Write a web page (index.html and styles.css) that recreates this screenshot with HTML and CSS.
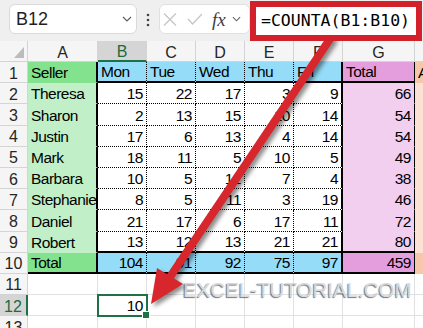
FILE: index.html
```html
<!DOCTYPE html>
<html lang="en">
<head>
    <meta charset="UTF-8">
    <meta name="viewport" content="width=device-width, initial-scale=1.0">
    <title>COUNTA example</title>
    <link rel="stylesheet" href="styles.css">
</head>
<body>
    <div class="toolbar">
        <div class="namebox">
            <span>B12</span>
            <svg class="chev" viewBox="0 0 10 6"><polyline points="1,1 5,5 9,1"/></svg>
        </div>
        <div class="dots">
            <svg width="4" height="14" viewBox="0 0 4 14">
                <circle cx="2" cy="2" r="1.3"/>
                <circle cx="2" cy="7" r="1.3"/>
                <circle cx="2" cy="12" r="1.3"/>
            </svg>
        </div>
        <div class="fxbox">
            <svg class="ico-x" width="14" height="13" viewBox="0 0 14 13"><path d="M1 0.5 L13 12.5 M13 0.5 L1 12.5"/></svg>
            <svg class="ico-ok" width="16" height="12" viewBox="0 0 16 12"><polyline points="1,6 5.5,11 15,1"/></svg>
            <span class="fx">fx</span>
            <svg class="chev" viewBox="0 0 10 6"><polyline points="1,1 5,5 9,1"/></svg>
        </div>
        <div class="formula">=COUNTA(B1:B10)</div>
    </div>

    <div class="sheet">
        <!-- column headers -->
        <div class="corner"><span class="tri"></span></div>
        <div class="ch">A</div>
        <div class="ch sel">B</div>
        <div class="ch">C</div>
        <div class="ch">D</div>
        <div class="ch">E</div>
        <div class="ch">F</div>
        <div class="ch">G</div>
        <div class="ch">H</div>

        <!-- row 1 -->
        <div class="rh">1</div>
        <div class="gs tr">Seller</div>
        <div class="bl dr tb">Mon</div>
        <div class="bl dr tb">Tue</div>
        <div class="bl dr tb">Wed</div>
        <div class="bl dr tb">Thu</div>
        <div class="bl tr tb">Fri</div>
        <div class="pk sr tb">Total</div>
        <div class="pe2">Avg</div>

        <!-- row 2 -->
        <div class="rh">2</div>
        <div class="gl tr">Theresa</div>
        <div class="num dr db">15</div>
        <div class="num dr db">22</div>
        <div class="num dr db">17</div>
        <div class="num dr db">3</div>
        <div class="num tr db">9</div>
        <div class="pkl num sr">66</div>
        <div class="pe"></div>

        <!-- row 3 -->
        <div class="rh">3</div>
        <div class="gl tr">Sharon</div>
        <div class="num dr db">2</div>
        <div class="num dr db">13</div>
        <div class="num dr db">15</div>
        <div class="num dr db">10</div>
        <div class="num tr db">14</div>
        <div class="pkl num sr">54</div>
        <div class="pe"></div>

        <!-- row 4 -->
        <div class="rh">4</div>
        <div class="gl tr">Justin</div>
        <div class="num dr db">17</div>
        <div class="num dr db">6</div>
        <div class="num dr db">13</div>
        <div class="num dr db">4</div>
        <div class="num tr db">14</div>
        <div class="pkl num sr">54</div>
        <div class="pe"></div>

        <!-- row 5 -->
        <div class="rh">5</div>
        <div class="gl tr">Mark</div>
        <div class="num dr db">18</div>
        <div class="num dr db">11</div>
        <div class="num dr db">5</div>
        <div class="num dr db">10</div>
        <div class="num tr db">5</div>
        <div class="pkl num sr">49</div>
        <div class="pe"></div>

        <!-- row 6 -->
        <div class="rh">6</div>
        <div class="gl tr">Barbara</div>
        <div class="num dr db">10</div>
        <div class="num dr db">5</div>
        <div class="num dr db">12</div>
        <div class="num dr db">7</div>
        <div class="num tr db">4</div>
        <div class="pkl num sr">38</div>
        <div class="pe"></div>

        <!-- row 7 -->
        <div class="rh">7</div>
        <div class="gl tr">Stephanie</div>
        <div class="num dr db">8</div>
        <div class="num dr db">5</div>
        <div class="num dr db">11</div>
        <div class="num dr db">3</div>
        <div class="num tr db">19</div>
        <div class="pkl num sr">46</div>
        <div class="pe"></div>

        <!-- row 8 -->
        <div class="rh">8</div>
        <div class="gl tr">Daniel</div>
        <div class="num dr db">21</div>
        <div class="num dr db">17</div>
        <div class="num dr db">6</div>
        <div class="num dr db">17</div>
        <div class="num tr db">11</div>
        <div class="pkl num sr">72</div>
        <div class="pe"></div>

        <!-- row 9 -->
        <div class="rh">9</div>
        <div class="gl tr">Robert</div>
        <div class="num dr tb">13</div>
        <div class="num dr tb">12</div>
        <div class="num dr tb">13</div>
        <div class="num dr tb">21</div>
        <div class="num tr tb">21</div>
        <div class="pkl num sr tb">80</div>
        <div class="pe"></div>

        <!-- row 10 -->
        <div class="rh">10</div>
        <div class="gs tr tb">Total</div>
        <div class="bl num dr tb">104</div>
        <div class="bl num dr tb">91</div>
        <div class="bl num dr tb">92</div>
        <div class="bl num dr tb">75</div>
        <div class="bl num tr tb">97</div>
        <div class="pk num sr tb">459</div>
        <div class="pe2"></div>

        <!-- row 11 -->
        <div class="rh">11</div>
        <div></div><div></div><div></div><div></div><div></div><div></div><div></div><div></div>

        <!-- row 12 -->
        <div class="rh sel">12</div>
        <div></div>
        <div class="num active">10</div>
        <div></div><div></div><div></div><div></div><div></div><div></div>

        <!-- row 13 -->
        <div class="rh">13</div>
        <div></div><div></div><div></div><div></div><div></div><div></div><div></div><div></div>
    </div>

    <div class="watermark">EXCEL-TUTORIAL.COM</div>

    <svg class="arrow" width="423" height="328" viewBox="0 0 423 328">
        <line x1="332" y1="36" x2="170" y2="277"/>
        <polygon points="151,304 157,268 183,284"/>
    </svg>
</body>
</html>
```

FILE: styles.css
```css
* {
    margin: 0;
    padding: 0;
    box-sizing: border-box;
}

body {
    width: 423px;
    height: 328px;
    overflow: hidden;
    position: relative;
    background: #fff;
    font-family: "Liberation Sans", Arial, sans-serif;
    color: #1f1f1f;
}

/* formula bar */
.toolbar {
    height: 41px;
    background: #efefef;
    display: flex;
    align-items: flex-start;
    padding-left: 9px;
}

.namebox {
    width: 128px;
    height: 30px;
    margin-top: 4px;
    background: #fff;
    border: 1px solid #dadada;
    border-radius: 6px;
    display: flex;
    align-items: center;
    justify-content: space-between;
    padding: 0 4px 0 6px;
    font-size: 18px;
}

.chev {
    width: 10px;
    height: 6px;
    fill: none;
    stroke: #606060;
    stroke-width: 1.2;
}

.dots {
    width: 22px;
    margin-top: 13px;
    display: flex;
    justify-content: center;
    fill: #444;
}

.fxbox {
    width: 91px;
    height: 30px;
    margin-top: 4px;
    background: #fff;
    border: 1px solid #e0e0e0;
    border-radius: 6px;
    display: flex;
    align-items: center;
    padding-left: 3px;
}

.ico-x,
.ico-ok {
    fill: none;
    stroke: #c6c6c6;
    stroke-width: 1.3;
}

.ico-ok {
    margin-left: 10px;
}

.fx {
    margin-left: 9px;
    width: 15px;
    font-family: "Liberation Serif", serif;
    font-style: italic;
    font-size: 19px;
    color: #404040;
    line-height: 1;
}

.fxbox .chev {
    margin-left: 5px;
    width: 9px;
}

.formula {
    flex: 1;
    height: 40px;
    margin: 1px 1px 0 0;
    border: 6px solid #d3212b;
    background: #fff;
    font-family: "DejaVu Sans Mono", monospace;
    font-size: 16.5px;
    line-height: 28px;
    padding-left: 5px;
    color: #000;
    position: relative;
    z-index: 2;
}

/* worksheet */
.sheet {
    display: grid;
    grid-template-columns: 28px 70px 49px 49px 49px 49px 49px 72px 60px;
    grid-template-rows: 21px;
    grid-auto-rows: 21.2px;
}

.sheet > div {
    border-right: 1px solid #e1e1e1;
    border-bottom: 1px solid #e1e1e1;
    display: flex;
    align-items: flex-end;
    padding: 0 3px 1px 3px;
    font-family: "Liberation Sans", Arial, sans-serif;
    font-size: 15.5px;
    letter-spacing: -0.5px;
    line-height: 17px;
    color: #000;
    white-space: nowrap;
}

.sheet > .corner {
    background: #f5f5f5;
    border-color: #d4d4d4;
    position: relative;
}

.tri {
    position: absolute;
    right: 3px;
    bottom: 3px;
    width: 0;
    height: 0;
    border-left: 10px solid transparent;
    border-bottom: 11px solid #bcbcbc;
}

.sheet > .ch,
.sheet > .rh {
    background: #f5f5f5;
    border-color: #d4d4d4;
    justify-content: center;
    align-items: center;
    padding: 2px 0 0 0;
    font-size: 16px;
    letter-spacing: 0;
    color: #262626;
}

.sheet > .ch.sel {
    background: #d5d5d5;
    color: #1d6a3e;
    border-bottom: 2px solid #1e7145;
}

.sheet > .rh.sel {
    background: #d5d5d5;
    color: #1d6a3e;
    border-right: 2px solid #1e7145;
}

.sheet > .num {
    justify-content: flex-end;
}

/* fills */
.sheet > .gs { background: #83e28e; border-color: transparent; }
.sheet > .gl { background: #c1f0c8; border-color: transparent; }
.sheet > .bl { background: #94dcf8; }
.sheet > .pk { background: #e59edd; border-color: transparent; }
.sheet > .pkl { background: #f2ceef; border-color: transparent; }
.sheet > .pe { background: #fbe2d5; border-color: transparent; }
.sheet > .pe2 { background: #f7c7ac; border-color: transparent; }

/* borders */
.sheet > .dr { border-right: 1px dotted #000; }
.sheet > .db { border-bottom: 1px dotted #000; }
.sheet > .sr { border-right: 1px solid #000; }
.sheet > .tr { border-right: 2px solid #000; }
.sheet > .tb { border-bottom: 2px solid #000; }

.sheet > .active {
    position: relative;
    outline: 2px solid #1e7145;
    outline-offset: -1px;
}

.active::after {
    content: "";
    position: absolute;
    right: -4px;
    bottom: -4px;
    width: 6px;
    height: 6px;
    background: #1e7145;
    border: 1px solid #fff;
}

/* annotations */
.watermark {
    position: absolute;
    left: 183px;
    top: 280px;
    font-size: 20.5px;
    line-height: 20.5px;
    color: #dadada;
    text-shadow: -1px 1px 1px rgba(0, 0, 0, 0.55);
}

.arrow {
    position: absolute;
    left: 0;
    top: 0;
    pointer-events: none;
    filter: drop-shadow(3px 3px 2px rgba(0, 0, 0, 0.45));
}

.arrow line {
    stroke: #d8262d;
    stroke-width: 8;
}

.arrow polygon {
    fill: #d8262d;
}
```
